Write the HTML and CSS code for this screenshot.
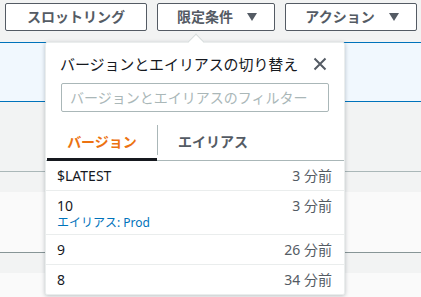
FILE: index.html
```html
<!DOCTYPE html>
<html lang="ja">
<head>
<meta charset="utf-8">
<link rel="stylesheet" href="styles.css">
</head>
<body>
<div class="page">
  <div class="toolbar">
    <button class="btn">スロットリング</button>
    <button class="btn">限定条件<svg class="caret" width="10" height="8" viewBox="0 0 10 8"><polygon points="0,0 10,0 5,8"/></svg></button>
    <button class="btn">アクション<svg class="caret" width="10" height="8" viewBox="0 0 10 8"><polygon points="0,0 10,0 5,8"/></svg></button>
  </div>
  <div class="alert"></div>
  <div class="section"></div>
  <div class="band"></div>
  <div class="trow"></div>
  <div class="band"></div>
  <div class="rest"></div>

  <div class="popover">
    <div class="arrow"></div>
    <div class="pop-head">
      <div class="pop-title">バージョンとエイリアスの切り替え</div>
      <svg class="close" width="14" height="14" viewBox="0 0 14 14"><path d="M1.5 1.5 L12.5 12.5 M12.5 1.5 L1.5 12.5"/></svg>
    </div>
    <div class="filter">バージョンとエイリアスのフィルター</div>
    <div class="tabs">
      <div class="tab active">バージョン</div>
      <span class="tab-sep"></span>
      <div class="tab">エイリアス</div>
    </div>
    <div class="list">
      <div class="item"><div class="name">$LATEST</div><div class="time">3 分前</div></div>
      <div class="item"><div class="name">10<div class="alias">エイリアス: Prod</div></div><div class="time">3 分前</div></div>
      <div class="item"><div class="name">9</div><div class="time">26 分前</div></div>
      <div class="item"><div class="name">8</div><div class="time">34 分前</div></div>
    </div>
  </div>
</div>
</body>
</html>
```
FILE: styles.css
```css
* { box-sizing: border-box; }
html, body { margin: 0; padding: 0; }
body {
  font-family: "Noto Sans", "Noto Sans CJK JP", sans-serif;
  font-size: 14px;
  color: #16191f;
  background: #ffffff;
}
.page {
  position: relative;
  width: 421px;
  height: 297px;
  overflow: hidden;
}
.toolbar {
  height: 42px;
  background: #f2f3f3;
  display: flex;
  justify-content: flex-end;
  align-items: flex-start;
  gap: 10px;
  padding: 3px 4px 0;
}
.btn {
  flex: none;
  white-space: nowrap;
  height: 28px;
  padding: 0 18px 0 20px;
  border: 1px solid #545b64;
  border-radius: 2px;
  background: #ffffff;
  color: #545b64;
  font-family: "Noto Sans", "Noto Sans CJK JP", sans-serif;
  font-size: 14px;
  font-weight: 700;
  display: flex;
  align-items: center;
  justify-content: center;
  gap: 14px;
  line-height: 20px;
}
.btn:nth-child(1) { width: 142px; padding: 0; }
.btn:nth-child(2) { width: 118px; }
.btn:nth-child(3) { width: 132px; }
.caret { fill: #545b64; display: block; flex: none; }
.alert {
  height: 60px;
  background: #f1f8fe;
  border-top: 1px solid #0073bb;
  border-bottom: 1px solid #0073bb;
}
.section {
  height: 70px;
  background: #f2f3f3;
  border-bottom: 1px solid #aab7b8;
}
.band {
  height: 20px;
  background: #f2f3f3;
}
.trow {
  height: 61px;
  background: #fafafa;
  border-bottom: 1px solid #879596;
}
.rest {
  height: 40px;
  background: #fafafa;
}
.popover {
  position: absolute;
  left: 45px;
  top: 42px;
  width: 300px;
  background: #ffffff;
  border: 1px solid #eaeded;
  border-radius: 2px;
  box-shadow: 0 1px 4px rgba(0, 28, 36, 0.25);
}
.arrow {
  position: absolute;
  left: 144px;
  top: -7px;
  width: 12px;
  height: 12px;
  background: #ffffff;
  border-top: 1px solid #d5dbdb;
  border-left: 1px solid #d5dbdb;
  transform: rotate(45deg);
}
.pop-head {
  position: relative;
  display: flex;
  justify-content: space-between;
  align-items: center;
  padding: 11px 17px 0 14px;
}
.pop-title {
  font-size: 15px;
  line-height: 20px;
  color: #16191f;
  letter-spacing: -0.1px;
}
.close {
  display: block;
  fill: none;
  stroke: #545b64;
  stroke-width: 2;
}
.filter {
  margin: 9px 15px 0;
  height: 29px;
  border: 1px solid #aab7b8;
  border-radius: 2px;
  padding: 0 8px;
  line-height: 27px;
  color: #aab7b8;
  font-size: 14px;
}
.tabs {
  margin-top: 8px;
  display: flex;
  align-items: center;
  height: 41px;
  padding-left: 1px;
  border-bottom: 1px solid #aab7b8;
}
.tab {
  width: 110px;
  height: 41px;
  margin-bottom: -1px;
  align-self: flex-start;
  display: flex;
  align-items: center;
  justify-content: center;
  font-weight: 700;
  color: #545b64;
  border-bottom: 3px solid transparent;
  padding-top: 3px;
}
.tab.active {
  color: #ec7211;
  border-bottom-color: #16191f;
}
.tab-sep {
  width: 1px;
  height: 30px;
  background: #aab7b8;
}
.item {
  display: flex;
  justify-content: space-between;
  align-items: flex-start;
  padding: 5px 12px 4px 11px;
  line-height: 20px;
  border-bottom: 1px solid #eaeded;
}
.item:last-child { border-bottom: none; }
.time { color: #545b64; }
.alias {
  font-size: 12px;
  line-height: 14px;
  color: #0073bb;
}
```
